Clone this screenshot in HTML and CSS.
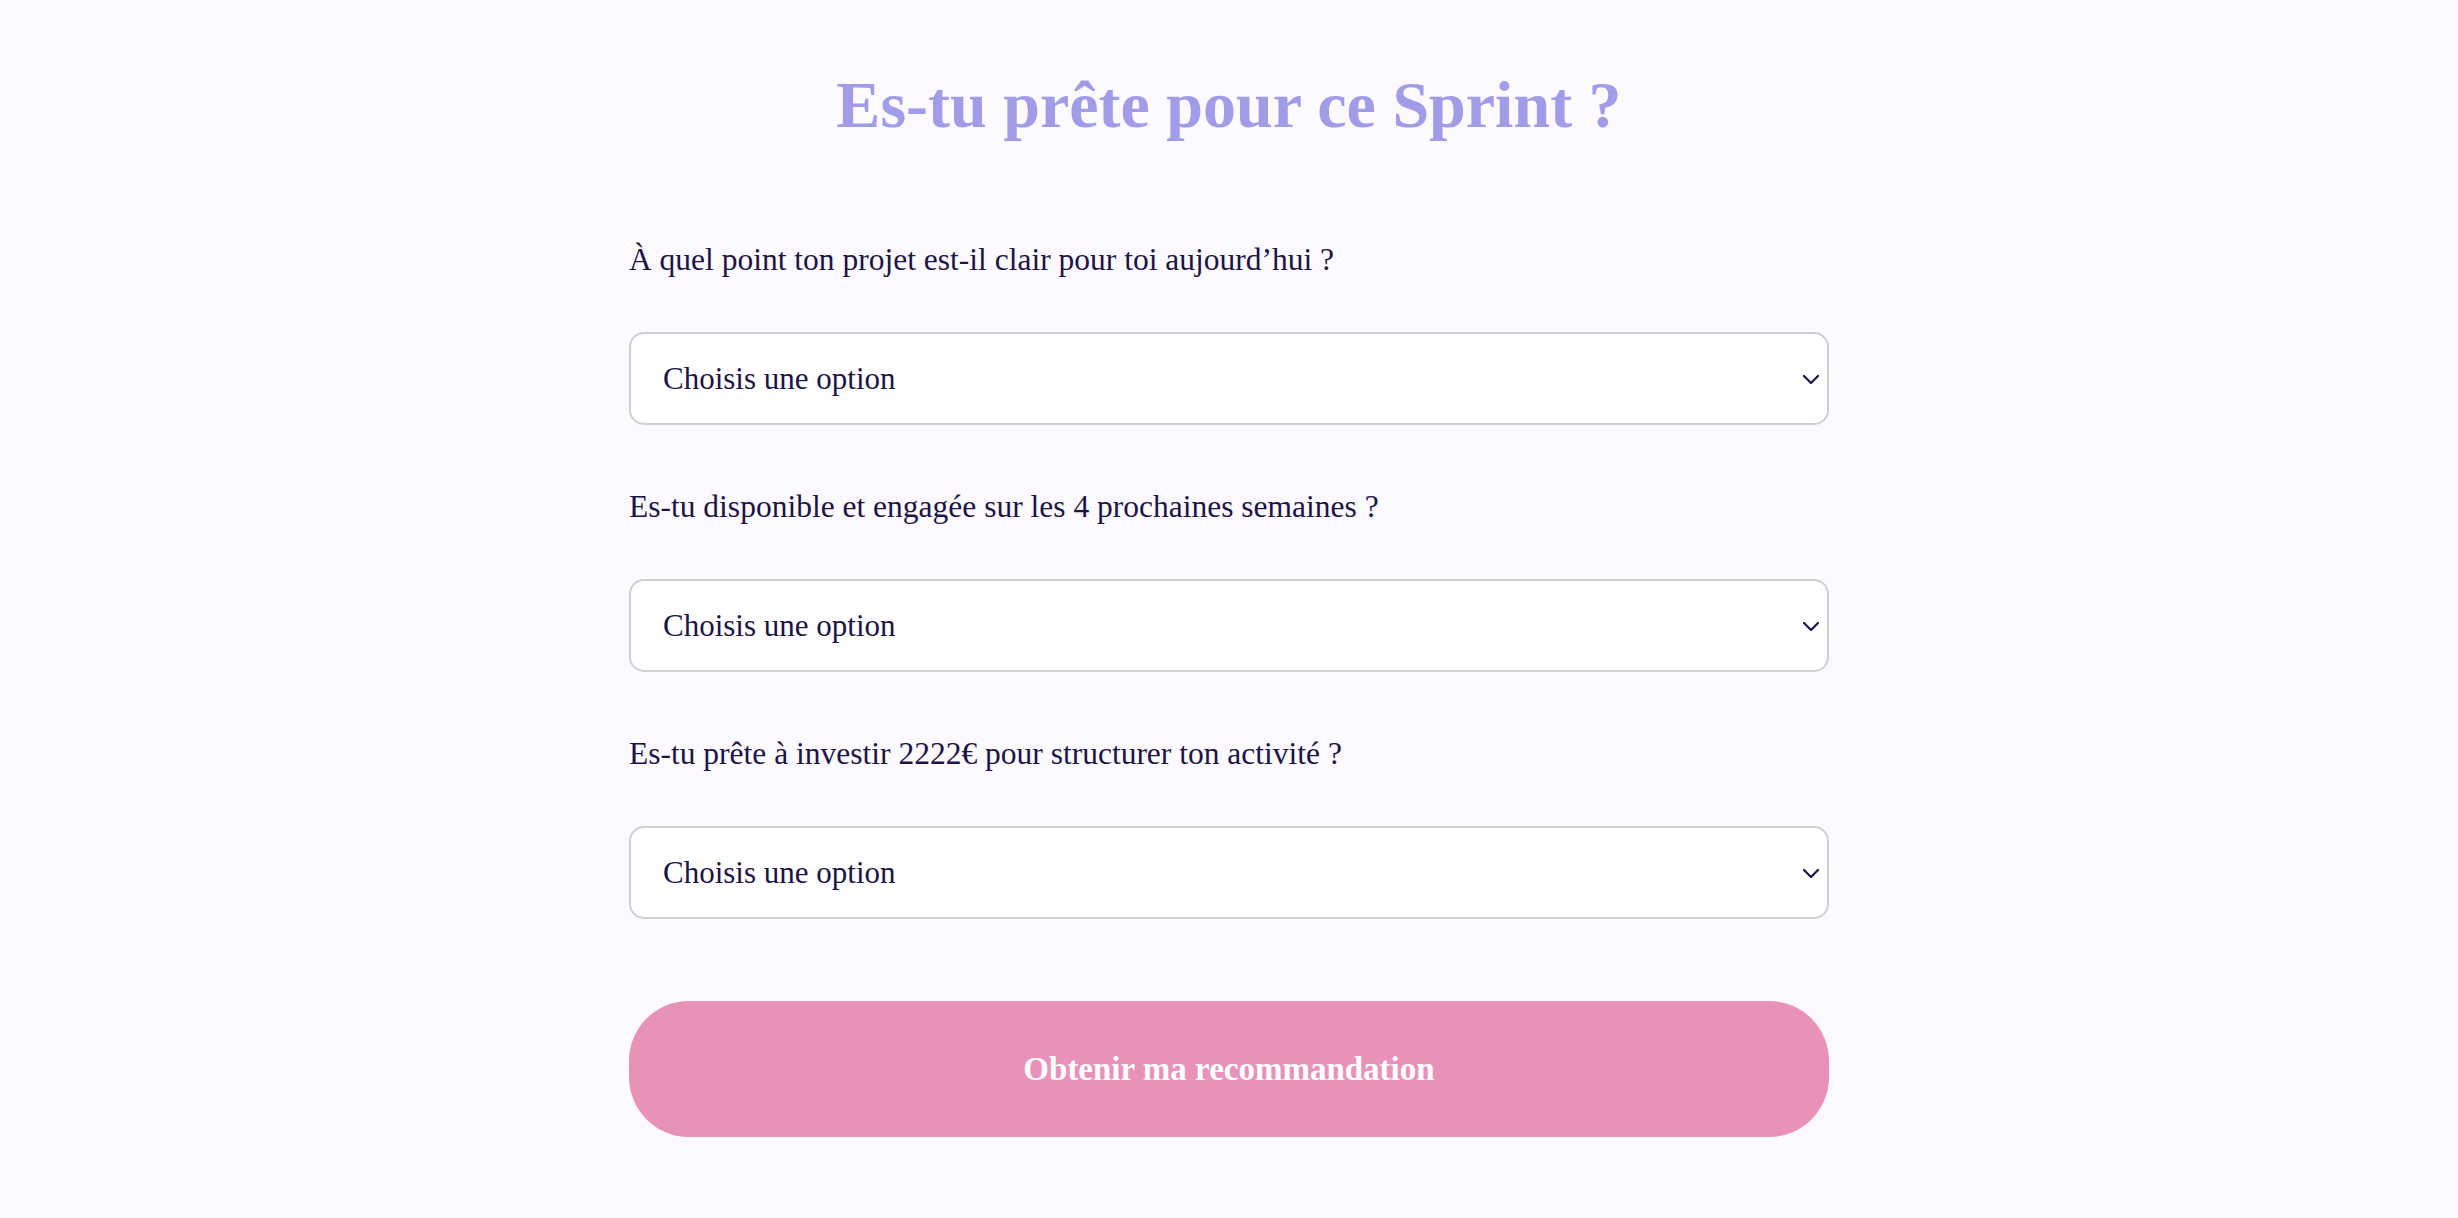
FILE: index.html
```html
<!DOCTYPE html>
<html lang="fr">
<head>
<meta charset="utf-8">
<title>Es-tu prête pour ce Sprint ?</title>
<link rel="stylesheet" href="styles.css">
</head>
<body>
<main class="quiz">
  <h1 class="quiz-title">Es-tu prête pour ce Sprint ?</h1>
  <form class="quiz-form">
    <div class="field">
      <label class="field-label" for="q1">À quel point ton projet est-il clair pour toi aujourd’hui ?</label>
      <div class="select-wrap">
        <select id="q1" class="field-select">
          <option>Choisis une option</option>
        </select>
        <svg class="chevron" viewBox="0 0 16 9" width="16" height="9" aria-hidden="true"><path d="M1 1l7 7 7-7" fill="none" stroke="#1c1447" stroke-width="2.2" stroke-linecap="round" stroke-linejoin="round"/></svg>
      </div>
    </div>
    <div class="field">
      <label class="field-label" for="q2">Es-tu disponible et engagée sur les 4 prochaines semaines ?</label>
      <div class="select-wrap">
        <select id="q2" class="field-select">
          <option>Choisis une option</option>
        </select>
        <svg class="chevron" viewBox="0 0 16 9" width="16" height="9" aria-hidden="true"><path d="M1 1l7 7 7-7" fill="none" stroke="#1c1447" stroke-width="2.2" stroke-linecap="round" stroke-linejoin="round"/></svg>
      </div>
    </div>
    <div class="field">
      <label class="field-label" for="q3">Es-tu prête à investir 2222€ pour structurer ton activité ?</label>
      <div class="select-wrap">
        <select id="q3" class="field-select">
          <option>Choisis une option</option>
        </select>
        <svg class="chevron" viewBox="0 0 16 9" width="16" height="9" aria-hidden="true"><path d="M1 1l7 7 7-7" fill="none" stroke="#1c1447" stroke-width="2.2" stroke-linecap="round" stroke-linejoin="round"/></svg>
      </div>
    </div>
    <button type="button" class="submit">Obtenir ma recommandation</button>
  </form>
</main>
</body>
</html>
```
FILE: styles.css
```css
html, body {
  margin: 0;
  padding: 0;
  background: #fcfaff;
}
body {
  font-family: "Liberation Serif", "Times New Roman", serif;
  color: #1c1447;
  min-height: 1218px;
}
.quiz {
  width: 1200px;
  margin: 0 auto;
  padding-top: 65px;
}
.quiz-title {
  margin: 0;
  text-align: center;
  font-size: 66px;
  line-height: 79px;
  font-weight: 700;
  color: #a09ce8;
}
.quiz-form {
  display: flex;
  flex-direction: column;
  gap: 64px;
  margin-top: 98px;
}
.field {
  display: flex;
  flex-direction: column;
  gap: 54px;
}
.field-label {
  display: block;
  font-size: 31.5px;
  line-height: 36px;
  color: #1c1447;
}
.select-wrap {
  position: relative;
}
.field-select {
  display: block;
  width: 100%;
  height: 93px;
  box-sizing: border-box;
  margin: 0;
  padding: 0 50px 0 32px;
  border: 2px solid #cfcfd2;
  border-radius: 15px;
  background: #ffffff;
  font-family: "Liberation Serif", "Times New Roman", serif;
  font-size: 31px;
  color: #1c1447;
  -webkit-appearance: none;
  appearance: none;
  outline: none;
}
.chevron {
  position: absolute;
  right: 10px;
  top: 50%;
  margin-top: -4px;
  pointer-events: none;
}
.submit {
  margin-top: 18px;
  width: 100%;
  height: 136px;
  border: none;
  border-radius: 60px;
  background: #e892b9;
  color: #ffffff;
  font-family: "Liberation Serif", "Times New Roman", serif;
  font-size: 33px;
  font-weight: 700;
  cursor: pointer;
}
```
